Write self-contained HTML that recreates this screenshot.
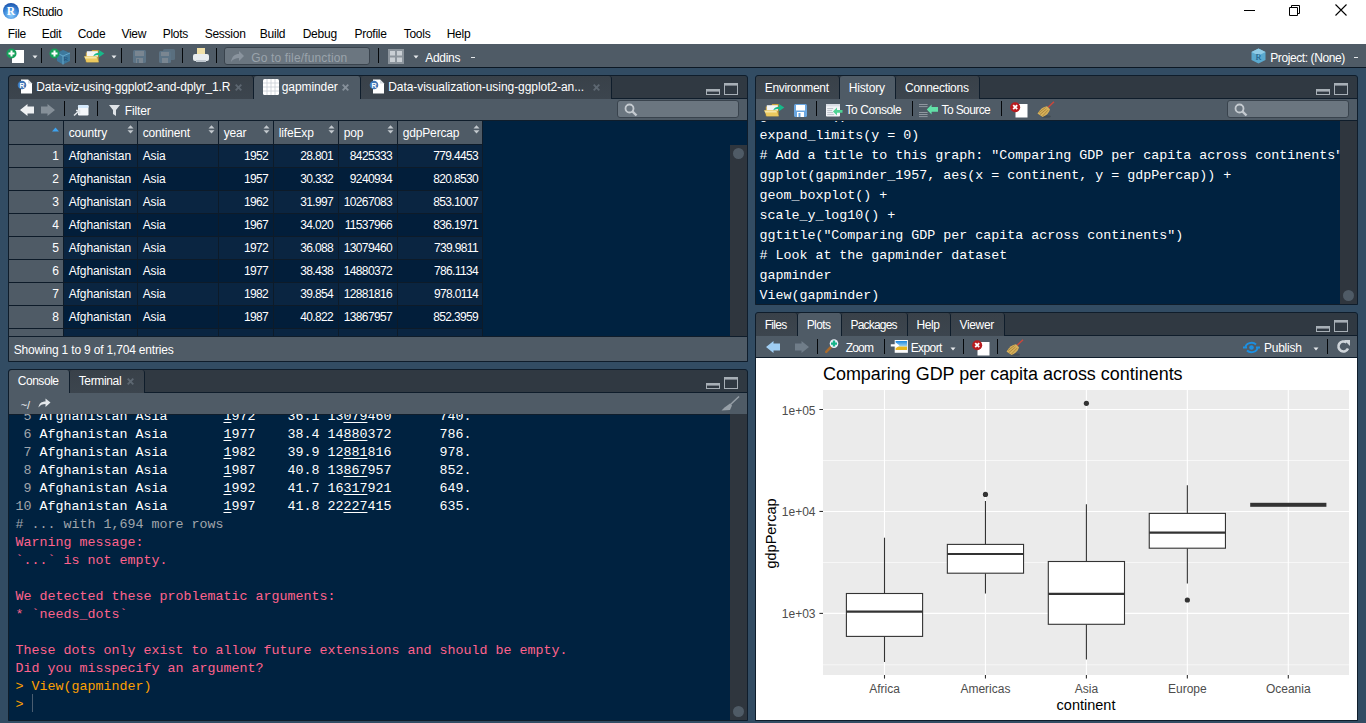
<!DOCTYPE html>
<html><head><meta charset="utf-8">
<style>
*{margin:0;padding:0;box-sizing:border-box}
html,body{width:1366px;height:723px;overflow:hidden;background:#324c63;font-family:"Liberation Sans",sans-serif;font-size:12px;color:#fff}
.a{position:absolute}
.t{position:absolute;white-space:pre;line-height:1}
.pane{position:absolute;background:#002240;border:1px solid #0f1d2b;border-radius:3px 3px 0 0;overflow:hidden}
.tabbar{position:absolute;left:0;top:0;right:0;height:23px;background:#303942;border-bottom:1px solid #0f1d2b}
.tab{position:absolute;top:0;height:23px;background:linear-gradient(#394149,#3c454e);border-right:1px solid #0f1d2b;border-radius:3px 3px 0 0}
.tab.on{background:#4f5b66;height:24px}
.ptb{position:absolute;left:0;right:0;height:22px;background:#4f5b66;border-bottom:1px solid #0f1d2b}
.cl{position:absolute;white-space:pre;font-family:"Liberation Mono",monospace;font-size:13.33px;line-height:18px}
.cl u{text-decoration:underline;text-underline-offset:1.5px;text-decoration-thickness:1px}
</style></head><body>
<div class="a" style="left:0;top:0;width:1366px;height:44px;background:#fff"></div>
<svg class="a" style="left:2px;top:2px" width="18" height="18" viewBox="0 0 18 18"><defs><radialGradient id="rg" cx="50%" cy="75%" r="75%"><stop offset="0" stop-color="#8fd0ff"/><stop offset="0.6" stop-color="#3a86d8"/><stop offset="1" stop-color="#1a4fa8"/></radialGradient></defs><circle cx="9" cy="9" r="8" fill="url(#rg)"/><text x="9" y="13.2" font-family="Liberation Serif" font-weight="bold" font-size="11.5" fill="#fff" text-anchor="middle">R</text></svg>
<span class="t" style="left:22.70px;top:6.14px;color:#000;font-size:12px;letter-spacing:-0.4px">RStudio</span>
<svg class="a" style="left:1244px;top:10px" width="12" height="2"><rect width="11" height="1" fill="#000"/></svg>
<svg class="a" style="left:1288px;top:4px" width="13" height="13"><path d="M1.5 3.5h8v8h-8z M3.5 3.5v-2h8v8h-2" fill="none" stroke="#000"/></svg>
<svg class="a" style="left:1335px;top:4px" width="12" height="12"><path d="M0.5 0.5L11.5 11.5M11.5 0.5L0.5 11.5" stroke="#000" stroke-width="1.1"/></svg>
<span class="t" style="left:7.70px;top:28.24px;color:#000;font-size:12px;letter-spacing:-0.25px">File</span>
<span class="t" style="left:41.70px;top:28.24px;color:#000;font-size:12px;letter-spacing:-0.25px">Edit</span>
<span class="t" style="left:77.70px;top:28.24px;color:#000;font-size:12px;letter-spacing:-0.25px">Code</span>
<span class="t" style="left:121.40px;top:28.24px;color:#000;font-size:12px;letter-spacing:-0.25px">View</span>
<span class="t" style="left:162.70px;top:28.24px;color:#000;font-size:12px;letter-spacing:-0.25px">Plots</span>
<span class="t" style="left:204.70px;top:28.24px;color:#000;font-size:12px;letter-spacing:-0.25px">Session</span>
<span class="t" style="left:259.80px;top:28.24px;color:#000;font-size:12px;letter-spacing:-0.25px">Build</span>
<span class="t" style="left:302.70px;top:28.24px;color:#000;font-size:12px;letter-spacing:-0.25px">Debug</span>
<span class="t" style="left:354.40px;top:28.24px;color:#000;font-size:12px;letter-spacing:-0.25px">Profile</span>
<span class="t" style="left:403.70px;top:28.24px;color:#000;font-size:12px;letter-spacing:-0.25px">Tools</span>
<span class="t" style="left:446.70px;top:28.24px;color:#000;font-size:12px;letter-spacing:-0.25px">Help</span>
<div class="a" style="left:0;top:44px;width:1366px;height:24px;background:#4f5b66;border-bottom:1px solid #0c1824"></div>
<svg class="a" style="left:6px;top:48px" width="20" height="16" viewBox="0 0 20 16"><rect x="6" y="2" width="12" height="13" fill="#fff"/><circle cx="5.5" cy="5.5" r="5" fill="#16a05a"/><path d="M5.5 2.5v6M2.5 5.5h6" stroke="#fff" stroke-width="2"/></svg>
<svg class="a" style="left:32px;top:55px" width="6" height="4"><path d="M0.5 0.5h5l-2.5 3z" fill="#e6e9ec"/></svg>
<div class="a" style="left:41px;top:48px;width:1px;height:15px;background:#05080b"></div>
<svg class="a" style="left:49px;top:48px" width="22" height="17" viewBox="0 0 22 17"><path d="M8 5l6-3 7 3v8l-7 3.5-6-3.5z" fill="#3a7fa8" opacity="0.85"/><path d="M8 5l6 3 7-3M14 8v8.5" stroke="#6fb4d8" stroke-width="0.8" fill="none"/><text x="14.5" y="13" font-family="Liberation Serif" font-size="7" fill="#1a4e7a">R</text><circle cx="5.5" cy="5.5" r="5" fill="#16a05a"/><path d="M5.5 2.5v6M2.5 5.5h6" stroke="#fff" stroke-width="2"/></svg>
<div class="a" style="left:75px;top:48px;width:1px;height:15px;background:#05080b"></div>
<svg class="a" style="left:84px;top:49px" width="21" height="14" viewBox="0 0 21 14"><path d="M1.8 3.4H6.8L8.2 1.1H14.6V13.3H1.8z" fill="#c9a23c"/><rect x="2.8" y="2.2" width="11" height="5.5" fill="#f2f4f6"/><path d="M0 7.2H12.6L14.7 13.3H2.8z" fill="#ecc95e"/><path d="M0.6 7.7H12.2L12.9 9.6H1.3z" fill="#f6e6a6"/><path d="M9.2 7.2C10.3 4.6 12.5 3.8 15 3.8V1L20.3 4.6 15 8.2V5.9C13 5.9 11 6.3 9.2 7.2z" fill="#17b98a"/></svg>
<svg class="a" style="left:111px;top:55px" width="6" height="4"><path d="M0.5 0.5h5l-2.5 3z" fill="#e6e9ec"/></svg>
<div class="a" style="left:121px;top:48px;width:1px;height:15px;background:#05080b"></div>
<svg class="a" style="left:133px;top:50px" width="13" height="13" viewBox="0 0 13 13"><rect x="0" y="0" width="13" height="13" rx="1.5" fill="#5d7486"/><rect x="2" y="1" width="9" height="5" fill="#7a8691"/><rect x="3" y="8" width="7" height="5" fill="#7a8691"/><rect x="4" y="9" width="2" height="4" fill="#5d7486"/></svg>
<svg class="a" style="left:159px;top:49px" width="16" height="14" viewBox="0 0 16 14"><rect x="4" y="0" width="12" height="11" rx="1.5" fill="#5d7486" opacity="0.8"/><rect x="0" y="2" width="12" height="12" rx="1.5" fill="#5d7486"/><rect x="2" y="3" width="8" height="4" fill="#7a8691"/><rect x="3" y="9" width="6" height="5" fill="#7a8691"/></svg>
<div class="a" style="left:182px;top:48px;width:1px;height:15px;background:#05080b"></div>
<svg class="a" style="left:193px;top:48px" width="16" height="15" viewBox="0 0 16 15"><rect x="4" y="0" width="8" height="7" fill="#f0e0a8"/><rect x="0" y="6" width="16" height="7" rx="2" fill="#e8ecef"/><rect x="3" y="12" width="10" height="2" fill="#c0c8cf"/></svg>
<div class="a" style="left:216px;top:48px;width:1px;height:15px;background:#05080b"></div>
<div class="a" style="left:224px;top:47px;width:146px;height:18px;background:#6b7680;border:1px solid #39434d;border-radius:3px"></div>
<svg class="a" style="left:230px;top:50px" width="15" height="13" viewBox="0 0 15 13"><path d="M1 12c1-6 4-8 8-8V1l5 5-5 5V8c-3 0-6 1-8 4z" fill="#8a949e"/></svg>
<span class="t" style="left:251.20px;top:51.64px;color:#9aa3ab;font-size:12px;letter-spacing:0.15px">Go to file/function</span>
<div class="a" style="left:378px;top:48px;width:1px;height:15px;background:#05080b"></div>
<svg class="a" style="left:388px;top:49px" width="16" height="15" viewBox="0 0 16 15"><rect x="0" y="0" width="16" height="15" fill="#8c959d"/><rect x="2" y="2" width="5" height="4.5" fill="#c9cfd4"/><rect x="9" y="2" width="5" height="4.5" fill="#c9cfd4"/><rect x="2" y="8.5" width="5" height="4.5" fill="#c9cfd4"/><rect x="9" y="8.5" width="5" height="4.5" fill="#c9cfd4"/></svg>
<svg class="a" style="left:413px;top:55px" width="6" height="4"><path d="M0.5 0.5h5l-2.5 3z" fill="#e6e9ec"/></svg>
<span class="t" style="left:425.20px;top:51.64px;color:#fff;font-size:12px;letter-spacing:-0.3px">Addins</span>
<div class="a" style="left:471px;top:57px;width:4px;height:1px;background:#e6e9ec"></div>
<svg class="a" style="left:1251px;top:48px" width="15" height="16" viewBox="0 0 15 16"><path d="M7.5 0.5l7 3.5v8l-7 3.5-7-3.5v-8z" fill="#5aa9cf"/><path d="M7.5 0.5l7 3.5-7 3.5-7-3.5z" fill="#8fcbe6"/><text x="7.5" y="12" font-family="Liberation Serif" font-size="9" fill="#1a5b86" text-anchor="middle">R</text></svg>
<span class="t" style="left:1270.20px;top:51.64px;color:#fff;font-size:12px;letter-spacing:-0.4px">Project: (None)</span>
<div class="a" style="left:1354px;top:57px;width:4px;height:1px;background:#e6e9ec"></div>
<div class="pane" style="left:8px;top:75px;width:740px;height:287px">
<div class="tabbar"></div>
<div class="tab" style="left:0px;width:245px"></div>
<svg class="a" style="left:8px;top:3px" width="16" height="15" viewBox="0 0 16 15"><path d="M4 0.5h7l4 4v10H4z" fill="#fff"/><path d="M11 0.5v4h4" fill="#d8dde2"/><circle cx="5" cy="6" r="4.3" fill="#3f77b8"/><text x="5" y="8.7" font-family="Liberation Sans" font-size="7" font-weight="bold" fill="#fff" text-anchor="middle">R</text></svg>
<span class="t" style="left:27.20px;top:5.44px;color:#fff;font-size:12px;letter-spacing:-0.15px">Data-viz-using-ggplot2-and-dplyr_1.R</span>
<svg class="a" style="left:226px;top:8px" width="7" height="7" viewBox="0 0 7 7"><path d="M0.7 0.7l5.6 5.6M6.3 0.7l-5.6 5.6" stroke="#5d6771" stroke-width="1.9"/></svg>
<div class="tab on" style="left:245px;width:107px"></div>
<svg class="a" style="left:254px;top:3px" width="16" height="16" viewBox="0 0 16 16"><rect x="0" y="0" width="16" height="16" rx="1.5" fill="#fff"/><path d="M4 0v16M8 0v16M12 0v16M0 4h16M0 8h16M0 12h16" stroke="#c9cfd5" stroke-width="0.8"/></svg>
<span class="t" style="left:272.70px;top:5.44px;color:#fff;font-size:12px;letter-spacing:-0.08px">gapminder</span>
<svg class="a" style="left:333px;top:8px" width="7" height="7" viewBox="0 0 7 7"><path d="M0.7 0.7l5.6 5.6M6.3 0.7l-5.6 5.6" stroke="#86909a" stroke-width="1.9"/></svg>
<div class="tab" style="left:352px;width:251px"></div>
<svg class="a" style="left:360px;top:3px" width="16" height="15" viewBox="0 0 16 15"><path d="M4 0.5h7l4 4v10H4z" fill="#fff"/><path d="M11 0.5v4h4" fill="#d8dde2"/><circle cx="5" cy="6" r="4.3" fill="#3f77b8"/><text x="5" y="8.7" font-family="Liberation Sans" font-size="7" font-weight="bold" fill="#fff" text-anchor="middle">R</text></svg>
<span class="t" style="left:379.20px;top:5.44px;color:#fff;font-size:12px;letter-spacing:-0.06px">Data-visualization-using-ggplot2-an...</span>
<svg class="a" style="left:584px;top:8px" width="7" height="7" viewBox="0 0 7 7"><path d="M0.7 0.7l5.6 5.6M6.3 0.7l-5.6 5.6" stroke="#5d6771" stroke-width="1.9"/></svg>
<svg class="a" style="left:697px;top:7px" width="34" height="14" viewBox="0 0 34 14"><rect x="0.5" y="6.5" width="13" height="5" fill="none" stroke="#a7afb6"/><rect x="1" y="7" width="12" height="1.6" fill="#a7afb6"/><rect x="18.5" y="0.5" width="13" height="11" fill="none" stroke="#a7afb6"/><rect x="19" y="1" width="12" height="1.6" fill="#a7afb6"/></svg>
<div class="ptb" style="top:23px"></div>
<svg class="a" style="left:11px;top:28px" width="36" height="12" viewBox="0 0 36 12"><path d="M0 6L7.5 0V2.6H14V9.4H7.5V12z" fill="#eef0f2"/><path d="M35 6L27.5 0V2.6H21V9.4H27.5V12z" fill="#858f98"/></svg>
<div class="a" style="left:55px;top:25px;width:1px;height:15px;background:#05080b"></div>
<svg class="a" style="left:64px;top:29px" width="16" height="12" viewBox="0 0 16 12"><rect x="5" y="0" width="10.5" height="10.5" rx="1.2" fill="#f4f7fa"/><rect x="5" y="0" width="10.5" height="3" rx="1" fill="#d3e8fb"/><path d="M1 10.5l5-4.5M3 5.5h3.5v3.5" stroke="#dfe4e8" stroke-width="1.6" fill="none"/></svg>
<div class="a" style="left:88px;top:25px;width:1px;height:15px;background:#05080b"></div>
<svg class="a" style="left:100px;top:29px" width="11" height="11" viewBox="0 0 11 11"><path d="M0 0h11L7 5v6l-3-2V5z" fill="#dfe3e7"/></svg>
<span class="t" style="left:115.70px;top:28.64px;color:#fff;font-size:12px;letter-spacing:-0.1px">Filter</span>
<div class="a" style="left:608px;top:24px;width:122px;height:18px;background:#6b7680;border:1px solid #39434d;border-radius:3px"></div><svg class="a" style="left:615px;top:27px" width="14" height="14" viewBox="0 0 14 14"><circle cx="5.5" cy="5.5" r="4" fill="none" stroke="#c4cacf" stroke-width="1.8"/><path d="M8.5 8.5l4 4" stroke="#c4cacf" stroke-width="2.4"/></svg>
<div class="a" style="left:0;top:45px;width:54px;height:215px;background:#4f5b66"></div>
<div class="a" style="left:55px;top:45px;width:418px;height:23px;background:#4f5b66"></div>
<svg class="a" style="left:43px;top:51px" width="7" height="5"><path d="M0 4.5L3.5 0.5 7 4.5z" fill="#3ea3f0"/></svg>
<span class="t" style="left:59.70px;top:50.94px;color:#fff;font-size:12px;letter-spacing:-0.15px">country</span>
<svg class="a" style="left:118px;top:49px" width="7" height="9" viewBox="0 0 7 9"><path d="M0.5 3.5L3.5 0.3 6.5 3.5zM0.5 5.3L3.5 8.5 6.5 5.3z" fill="#c3c9ce"/></svg>
<span class="t" style="left:133.70px;top:50.94px;color:#fff;font-size:12px;letter-spacing:-0.15px">continent</span>
<svg class="a" style="left:199px;top:49px" width="7" height="9" viewBox="0 0 7 9"><path d="M0.5 3.5L3.5 0.3 6.5 3.5zM0.5 5.3L3.5 8.5 6.5 5.3z" fill="#c3c9ce"/></svg>
<span class="t" style="left:214.70px;top:50.94px;color:#fff;font-size:12px;letter-spacing:-0.15px">year</span>
<svg class="a" style="left:254px;top:49px" width="7" height="9" viewBox="0 0 7 9"><path d="M0.5 3.5L3.5 0.3 6.5 3.5zM0.5 5.3L3.5 8.5 6.5 5.3z" fill="#c3c9ce"/></svg>
<span class="t" style="left:269.70px;top:50.94px;color:#fff;font-size:12px;letter-spacing:-0.15px">lifeExp</span>
<svg class="a" style="left:319px;top:49px" width="7" height="9" viewBox="0 0 7 9"><path d="M0.5 3.5L3.5 0.3 6.5 3.5zM0.5 5.3L3.5 8.5 6.5 5.3z" fill="#c3c9ce"/></svg>
<span class="t" style="left:334.70px;top:50.94px;color:#fff;font-size:12px;letter-spacing:-0.15px">pop</span>
<svg class="a" style="left:378px;top:49px" width="7" height="9" viewBox="0 0 7 9"><path d="M0.5 3.5L3.5 0.3 6.5 3.5zM0.5 5.3L3.5 8.5 6.5 5.3z" fill="#c3c9ce"/></svg>
<span class="t" style="left:393.70px;top:50.94px;color:#fff;font-size:12px;letter-spacing:-0.15px">gdpPercap</span>
<svg class="a" style="left:464px;top:49px" width="7" height="9" viewBox="0 0 7 9"><path d="M0.5 3.5L3.5 0.3 6.5 3.5zM0.5 5.3L3.5 8.5 6.5 5.3z" fill="#c3c9ce"/></svg>
<div class="a" style="left:55px;top:69px;width:418px;height:22px;background:#0a2541"></div>
<div class="a" style="left:0;top:68px;width:473px;height:1px;background:#0d1b29"></div>
<span class="t" style="left:0;width:50px;text-align:right;top:74.34px;color:#fff">1</span>
<span class="t" style="left:59.70px;top:74.34px;color:#fff;font-size:12px;letter-spacing:-0.1px">Afghanistan</span>
<span class="t" style="left:133.70px;top:74.34px;color:#fff;font-size:12px;letter-spacing:-0.1px">Asia</span>
<span class="t" style="left:210px;width:49px;text-align:right;top:74.34px;letter-spacing:-0.65px">1952</span>
<span class="t" style="left:265px;width:59px;text-align:right;top:74.34px;letter-spacing:-0.65px">28.801</span>
<span class="t" style="left:330px;width:53px;text-align:right;top:74.34px;letter-spacing:-0.65px">8425333</span>
<span class="t" style="left:389px;width:80px;text-align:right;top:74.34px;letter-spacing:-0.65px">779.4453</span>
<div class="a" style="left:55px;top:92px;width:418px;height:22px;background:#021e3a"></div>
<div class="a" style="left:0;top:91px;width:473px;height:1px;background:#0d1b29"></div>
<span class="t" style="left:0;width:50px;text-align:right;top:97.34px;color:#fff">2</span>
<span class="t" style="left:59.70px;top:97.34px;color:#fff;font-size:12px;letter-spacing:-0.1px">Afghanistan</span>
<span class="t" style="left:133.70px;top:97.34px;color:#fff;font-size:12px;letter-spacing:-0.1px">Asia</span>
<span class="t" style="left:210px;width:49px;text-align:right;top:97.34px;letter-spacing:-0.65px">1957</span>
<span class="t" style="left:265px;width:59px;text-align:right;top:97.34px;letter-spacing:-0.65px">30.332</span>
<span class="t" style="left:330px;width:53px;text-align:right;top:97.34px;letter-spacing:-0.65px">9240934</span>
<span class="t" style="left:389px;width:80px;text-align:right;top:97.34px;letter-spacing:-0.65px">820.8530</span>
<div class="a" style="left:55px;top:115px;width:418px;height:22px;background:#0a2541"></div>
<div class="a" style="left:0;top:114px;width:473px;height:1px;background:#0d1b29"></div>
<span class="t" style="left:0;width:50px;text-align:right;top:120.34px;color:#fff">3</span>
<span class="t" style="left:59.70px;top:120.34px;color:#fff;font-size:12px;letter-spacing:-0.1px">Afghanistan</span>
<span class="t" style="left:133.70px;top:120.34px;color:#fff;font-size:12px;letter-spacing:-0.1px">Asia</span>
<span class="t" style="left:210px;width:49px;text-align:right;top:120.34px;letter-spacing:-0.65px">1962</span>
<span class="t" style="left:265px;width:59px;text-align:right;top:120.34px;letter-spacing:-0.65px">31.997</span>
<span class="t" style="left:330px;width:53px;text-align:right;top:120.34px;letter-spacing:-0.65px">10267083</span>
<span class="t" style="left:389px;width:80px;text-align:right;top:120.34px;letter-spacing:-0.65px">853.1007</span>
<div class="a" style="left:55px;top:138px;width:418px;height:22px;background:#021e3a"></div>
<div class="a" style="left:0;top:137px;width:473px;height:1px;background:#0d1b29"></div>
<span class="t" style="left:0;width:50px;text-align:right;top:143.34px;color:#fff">4</span>
<span class="t" style="left:59.70px;top:143.34px;color:#fff;font-size:12px;letter-spacing:-0.1px">Afghanistan</span>
<span class="t" style="left:133.70px;top:143.34px;color:#fff;font-size:12px;letter-spacing:-0.1px">Asia</span>
<span class="t" style="left:210px;width:49px;text-align:right;top:143.34px;letter-spacing:-0.65px">1967</span>
<span class="t" style="left:265px;width:59px;text-align:right;top:143.34px;letter-spacing:-0.65px">34.020</span>
<span class="t" style="left:330px;width:53px;text-align:right;top:143.34px;letter-spacing:-0.65px">11537966</span>
<span class="t" style="left:389px;width:80px;text-align:right;top:143.34px;letter-spacing:-0.65px">836.1971</span>
<div class="a" style="left:55px;top:161px;width:418px;height:22px;background:#0a2541"></div>
<div class="a" style="left:0;top:160px;width:473px;height:1px;background:#0d1b29"></div>
<span class="t" style="left:0;width:50px;text-align:right;top:166.34px;color:#fff">5</span>
<span class="t" style="left:59.70px;top:166.34px;color:#fff;font-size:12px;letter-spacing:-0.1px">Afghanistan</span>
<span class="t" style="left:133.70px;top:166.34px;color:#fff;font-size:12px;letter-spacing:-0.1px">Asia</span>
<span class="t" style="left:210px;width:49px;text-align:right;top:166.34px;letter-spacing:-0.65px">1972</span>
<span class="t" style="left:265px;width:59px;text-align:right;top:166.34px;letter-spacing:-0.65px">36.088</span>
<span class="t" style="left:330px;width:53px;text-align:right;top:166.34px;letter-spacing:-0.65px">13079460</span>
<span class="t" style="left:389px;width:80px;text-align:right;top:166.34px;letter-spacing:-0.65px">739.9811</span>
<div class="a" style="left:55px;top:184px;width:418px;height:22px;background:#021e3a"></div>
<div class="a" style="left:0;top:183px;width:473px;height:1px;background:#0d1b29"></div>
<span class="t" style="left:0;width:50px;text-align:right;top:189.34px;color:#fff">6</span>
<span class="t" style="left:59.70px;top:189.34px;color:#fff;font-size:12px;letter-spacing:-0.1px">Afghanistan</span>
<span class="t" style="left:133.70px;top:189.34px;color:#fff;font-size:12px;letter-spacing:-0.1px">Asia</span>
<span class="t" style="left:210px;width:49px;text-align:right;top:189.34px;letter-spacing:-0.65px">1977</span>
<span class="t" style="left:265px;width:59px;text-align:right;top:189.34px;letter-spacing:-0.65px">38.438</span>
<span class="t" style="left:330px;width:53px;text-align:right;top:189.34px;letter-spacing:-0.65px">14880372</span>
<span class="t" style="left:389px;width:80px;text-align:right;top:189.34px;letter-spacing:-0.65px">786.1134</span>
<div class="a" style="left:55px;top:207px;width:418px;height:22px;background:#0a2541"></div>
<div class="a" style="left:0;top:206px;width:473px;height:1px;background:#0d1b29"></div>
<span class="t" style="left:0;width:50px;text-align:right;top:212.34px;color:#fff">7</span>
<span class="t" style="left:59.70px;top:212.34px;color:#fff;font-size:12px;letter-spacing:-0.1px">Afghanistan</span>
<span class="t" style="left:133.70px;top:212.34px;color:#fff;font-size:12px;letter-spacing:-0.1px">Asia</span>
<span class="t" style="left:210px;width:49px;text-align:right;top:212.34px;letter-spacing:-0.65px">1982</span>
<span class="t" style="left:265px;width:59px;text-align:right;top:212.34px;letter-spacing:-0.65px">39.854</span>
<span class="t" style="left:330px;width:53px;text-align:right;top:212.34px;letter-spacing:-0.65px">12881816</span>
<span class="t" style="left:389px;width:80px;text-align:right;top:212.34px;letter-spacing:-0.65px">978.0114</span>
<div class="a" style="left:55px;top:230px;width:418px;height:22px;background:#021e3a"></div>
<div class="a" style="left:0;top:229px;width:473px;height:1px;background:#0d1b29"></div>
<span class="t" style="left:0;width:50px;text-align:right;top:235.34px;color:#fff">8</span>
<span class="t" style="left:59.70px;top:235.34px;color:#fff;font-size:12px;letter-spacing:-0.1px">Afghanistan</span>
<span class="t" style="left:133.70px;top:235.34px;color:#fff;font-size:12px;letter-spacing:-0.1px">Asia</span>
<span class="t" style="left:210px;width:49px;text-align:right;top:235.34px;letter-spacing:-0.65px">1987</span>
<span class="t" style="left:265px;width:59px;text-align:right;top:235.34px;letter-spacing:-0.65px">40.822</span>
<span class="t" style="left:330px;width:53px;text-align:right;top:235.34px;letter-spacing:-0.65px">13867957</span>
<span class="t" style="left:389px;width:80px;text-align:right;top:235.34px;letter-spacing:-0.65px">852.3959</span>
<div class="a" style="left:55px;top:253px;width:418px;height:22px;background:#0a2541"></div>
<div class="a" style="left:0;top:252px;width:473px;height:1px;background:#0d1b29"></div>
<div class="a" style="left:54px;top:45px;width:1px;height:215px;background:#0d1b29"></div>
<div class="a" style="left:128px;top:45px;width:1px;height:215px;background:#0d1b29"></div>
<div class="a" style="left:209px;top:45px;width:1px;height:215px;background:#0d1b29"></div>
<div class="a" style="left:264px;top:45px;width:1px;height:215px;background:#0d1b29"></div>
<div class="a" style="left:329px;top:45px;width:1px;height:215px;background:#0d1b29"></div>
<div class="a" style="left:388px;top:45px;width:1px;height:215px;background:#0d1b29"></div>
<div class="a" style="left:473px;top:45px;width:1px;height:215px;background:#0d1b29"></div>
<div class="a" style="left:721px;top:69px;width:17px;height:191px;background:#2f363e"></div>
<div class="a" style="left:724px;top:72px;width:11px;height:11px;border-radius:50%;background:#4f5b66"></div>
<div class="a" style="left:0;top:260px;width:740px;height:26px;background:#4f5b66;border-top:1px solid #0f1d2b"></div>
<span class="t" style="left:4.70px;top:267.74px;color:#fff;font-size:12px;letter-spacing:-0.18px">Showing 1 to 9 of 1,704 entries</span>
</div>
<div class="pane" style="left:8px;top:369px;width:740px;height:352px">
<div class="tabbar"></div>
<div class="tab on" style="left:0px;width:61px"></div>
<span class="t" style="left:8.70px;top:5.34px;color:#fff;font-size:12px;letter-spacing:-0.45px">Console</span>
<div class="tab" style="left:61px;width:75px"></div>
<span class="t" style="left:69.70px;top:5.34px;color:#fff;font-size:12px;letter-spacing:-0.35px">Terminal</span>
<svg class="a" style="left:118px;top:8px" width="7" height="7" viewBox="0 0 7 7"><path d="M0.7 0.7l5.6 5.6M6.3 0.7l-5.6 5.6" stroke="#5d6771" stroke-width="1.9"/></svg>
<svg class="a" style="left:697px;top:7px" width="34" height="14" viewBox="0 0 34 14"><rect x="0.5" y="6.5" width="13" height="5" fill="none" stroke="#a7afb6"/><rect x="1" y="7" width="12" height="1.6" fill="#a7afb6"/><rect x="18.5" y="0.5" width="13" height="11" fill="none" stroke="#a7afb6"/><rect x="19" y="1" width="12" height="1.6" fill="#a7afb6"/></svg>
<div class="ptb" style="top:23px"></div>
<span class="t" style="left:11.70px;top:29.94px;color:#e8ecef;font-size:11px">~/</span>
<svg class="a" style="left:29px;top:28px" width="13" height="10" viewBox="0 0 13 10"><path d="M0.5 9.5c0.5-4 3-6 7-6V0.5l5 4-5 4.5V6c-3 0-5.5 1-7 3.5z" fill="#e3e7ea"/></svg>
<svg class="a" style="left:712px;top:26px" width="19" height="15" viewBox="0 0 19 15"><path d="M18 0.5L9 9" stroke="#97a0a8" stroke-width="1.4"/><path d="M9 7.5l2 2-2 4.5-8.5 0.5 3-3z" fill="#97a0a8"/></svg>
<div class="a" style="left:721px;top:44px;width:17px;height:306px;background:#2f363e"></div>
<div class="a" style="left:724px;top:336px;width:11px;height:11px;border-radius:50%;background:#4f5b66"></div>
<div class="a" style="left:0;top:44px;width:721px;height:306px;overflow:hidden"><div class="cl" style="left:6.5px;top:-6.40px"><span style="color:#a0a6ac"> 5 </span><span style="color:#ffffff">Afghanistan Asia       <u>1</u>972    36.1 13<u>079</u>460      740.</span></div><div class="cl" style="left:6.5px;top:11.60px"><span style="color:#a0a6ac"> 6 </span><span style="color:#ffffff">Afghanistan Asia       <u>1</u>977    38.4 14<u>880</u>372      786.</span></div><div class="cl" style="left:6.5px;top:29.60px"><span style="color:#a0a6ac"> 7 </span><span style="color:#ffffff">Afghanistan Asia       <u>1</u>982    39.9 12<u>881</u>816      978.</span></div><div class="cl" style="left:6.5px;top:47.60px"><span style="color:#a0a6ac"> 8 </span><span style="color:#ffffff">Afghanistan Asia       <u>1</u>987    40.8 13<u>867</u>957      852.</span></div><div class="cl" style="left:6.5px;top:65.60px"><span style="color:#a0a6ac"> 9 </span><span style="color:#ffffff">Afghanistan Asia       <u>1</u>992    41.7 16<u>317</u>921      649.</span></div><div class="cl" style="left:6.5px;top:83.60px"><span style="color:#a0a6ac">10 </span><span style="color:#ffffff">Afghanistan Asia       <u>1</u>997    41.8 22<u>227</u>415      635.</span></div><div class="cl" style="left:6.5px;top:101.60px"><span style="color:#a0a6ac"># ... with 1,694 more rows</span></div><div class="cl" style="left:6.5px;top:119.60px"><span style="color:#ff628c">Warning message:</span></div><div class="cl" style="left:6.5px;top:137.60px"><span style="color:#ff628c">`...` is not empty.</span></div><div class="cl" style="left:6.5px;top:155.60px"><span style="color:#ff628c"></span></div><div class="cl" style="left:6.5px;top:173.60px"><span style="color:#ff628c">We detected these problematic arguments:</span></div><div class="cl" style="left:6.5px;top:191.60px"><span style="color:#ff628c">* `needs_dots`</span></div><div class="cl" style="left:6.5px;top:209.60px"><span style="color:#ff628c"></span></div><div class="cl" style="left:6.5px;top:227.60px"><span style="color:#ff628c">These dots only exist to allow future extensions and should be empty.</span></div><div class="cl" style="left:6.5px;top:245.60px"><span style="color:#ff628c">Did you misspecify an argument?</span></div><div class="cl" style="left:6.5px;top:263.60px"><span style="color:#ffa000">&gt; View(gapminder)</span></div><div class="cl" style="left:6.5px;top:281.60px"><span style="color:#ffa000">&gt; </span></div><div class="a" style="left:23px;top:280px;width:1px;height:18px;background:#4a5d70"></div></div>
</div>
<div class="pane" style="left:755px;top:75px;width:603px;height:230px">
<div class="tabbar"></div>
<div class="tab" style="left:0px;width:84px"></div>
<span class="t" style="left:8.70px;top:5.64px;color:#fff;font-size:12px;letter-spacing:-0.3px">Environment</span>
<div class="tab on" style="left:84px;width:56px"></div>
<span class="t" style="left:92.70px;top:5.64px;color:#fff;font-size:12px;letter-spacing:-0.18px">History</span>
<div class="tab" style="left:140px;width:84px"></div>
<span class="t" style="left:149.00px;top:5.64px;color:#fff;font-size:12px;letter-spacing:-0.28px">Connections</span>
<svg class="a" style="left:560px;top:7px" width="34" height="14" viewBox="0 0 34 14"><rect x="0.5" y="6.5" width="13" height="5" fill="none" stroke="#a7afb6"/><rect x="1" y="7" width="12" height="1.6" fill="#a7afb6"/><rect x="18.5" y="0.5" width="13" height="11" fill="none" stroke="#a7afb6"/><rect x="19" y="1" width="12" height="1.6" fill="#a7afb6"/></svg>
<div class="ptb" style="top:23px"></div>
<svg class="a" style="left:8px;top:27px" width="21" height="14" viewBox="0 0 21 14"><path d="M1.8 3.4H6.8L8.2 1.1H14.6V13.3H1.8z" fill="#c9a23c"/><rect x="2.8" y="2.2" width="11" height="5.5" fill="#f2f4f6"/><path d="M0 7.2H12.6L14.7 13.3H2.8z" fill="#ecc95e"/><path d="M0.6 7.7H12.2L12.9 9.6H1.3z" fill="#f6e6a6"/><path d="M9.2 7.2C10.3 4.6 12.5 3.8 15 3.8V1L20.3 4.6 15 8.2V5.9C13 5.9 11 6.3 9.2 7.2z" fill="#17b98a"/></svg>
<svg class="a" style="left:38px;top:28px" width="13" height="13" viewBox="0 0 13 13"><rect x="0" y="0" width="13" height="13" rx="1.5" fill="#6aa6e0"/><rect x="2" y="1" width="9" height="5.5" fill="#fff"/><rect x="3" y="8" width="7" height="5" fill="#fff"/><rect x="4.5" y="9" width="2" height="4" fill="#6aa6e0"/></svg>
<div class="a" style="left:60px;top:25px;width:1px;height:15px;background:#05080b"></div>
<svg class="a" style="left:70px;top:28px" width="17" height="13" viewBox="0 0 17 13"><rect x="0" y="0" width="14" height="12.6" rx="0.8" fill="#f3f5f8"/><rect x="0" y="0" width="14" height="2.4" fill="#d9dee5"/><path d="M1.2 4.6h6M1.2 6.6h5M1.2 8.6h6M1.2 10.6h7" stroke="#b3bac3" stroke-width="0.9"/><path d="M7 7.5L11 3.5V6H16.5V8.7H11V11.5z" fill="#4fd494"/></svg>
<span class="t" style="left:89.40px;top:28.44px;color:#fff;font-size:12px;letter-spacing:-0.42px">To Console</span>
<div class="a" style="left:156px;top:25px;width:1px;height:15px;background:#05080b"></div>
<svg class="a" style="left:162px;top:28px" width="21" height="14" viewBox="0 0 21 14"><path d="M1 0.5h8.6M1 2.6h8.6M1 8.5h8.6M1 10.5h8.6M1 12.6h8.6" stroke="#8f979f" stroke-width="1"/><path d="M8.8 5.4L13.6 0.4V3H20V7.7H13.6V10.5z" fill="#62e0a8"/></svg>
<span class="t" style="left:185.50px;top:28.44px;color:#fff;font-size:12px;letter-spacing:-0.6px">To Source</span>
<div class="a" style="left:245px;top:25px;width:1px;height:15px;background:#05080b"></div>
<svg class="a" style="left:254px;top:26px" width="18" height="16" viewBox="0 0 18 16"><rect x="5.5" y="2" width="12" height="13.5" fill="#fff"/><circle cx="5.2" cy="5.2" r="5" fill="#b81c1f"/><path d="M3.2 3.2l4 4M7.2 3.2l-4 4" stroke="#fff" stroke-width="1.8"/></svg>
<svg class="a" style="left:281px;top:25px" width="18" height="17" viewBox="0 0 18 17"><path d="M17 0.7L11 6.5" stroke="#c8473c" stroke-width="1.5"/><ellipse cx="9" cy="15.5" rx="5" ry="1.3" fill="#3a434b" opacity="0.6"/><path d="M10 5.3l3 3c-0.8 3-3 6.2-7.5 7.7L0.5 12.5c3-4.5 5.5-6.8 9.5-7.2z" fill="#d6b05a"/><path d="M3 13.5l6.5-5.5M5.5 15l5.5-5.8M2 11.5l6.5-5" stroke="#a27d34" stroke-width="0.8"/></svg>
<div class="a" style="left:471px;top:24px;width:122px;height:18px;background:#6b7680;border:1px solid #39434d;border-radius:3px"></div><svg class="a" style="left:478px;top:27px" width="14" height="14" viewBox="0 0 14 14"><circle cx="5.5" cy="5.5" r="4" fill="none" stroke="#c4cacf" stroke-width="1.8"/><path d="M8.5 8.5l4 4" stroke="#c4cacf" stroke-width="2.4"/></svg>
<div class="a" style="left:0;top:45px;width:584px;height:183px;overflow:hidden"><div class="cl" style="left:3.4px;top:-14.70px;line-height:20px;color:#fff">geom_line()</div><div class="cl" style="left:3.4px;top:5.30px;line-height:20px;color:#fff">expand_limits(y = 0)</div><div class="cl" style="left:3.4px;top:25.30px;line-height:20px;color:#fff"># Add a title to this graph: "Comparing GDP per capita across continents"</div><div class="cl" style="left:3.4px;top:45.30px;line-height:20px;color:#fff">ggplot(gapminder_1957, aes(x = continent, y = gdpPercap)) +</div><div class="cl" style="left:3.4px;top:65.30px;line-height:20px;color:#fff">geom_boxplot() +</div><div class="cl" style="left:3.4px;top:85.30px;line-height:20px;color:#fff">scale_y_log10() +</div><div class="cl" style="left:3.4px;top:105.30px;line-height:20px;color:#fff">ggtitle("Comparing GDP per capita across continents")</div><div class="cl" style="left:3.4px;top:125.30px;line-height:20px;color:#fff"># Look at the gapminder dataset</div><div class="cl" style="left:3.4px;top:145.30px;line-height:20px;color:#fff">gapminder</div><div class="cl" style="left:3.4px;top:165.30px;line-height:20px;color:#fff">View(gapminder)</div></div>
<div class="a" style="left:584px;top:45px;width:17px;height:183px;background:#2f363e"></div>
<div class="a" style="left:587px;top:214px;width:11px;height:11px;border-radius:50%;background:#4f5b66"></div>
</div>
<div class="pane" style="left:755px;top:312px;width:603px;height:409px">
<div class="tabbar"></div>
<div class="tab" style="left:0px;width:42px"></div>
<span class="t" style="left:8.70px;top:5.64px;color:#fff;font-size:12px;letter-spacing:-0.7px">Files</span>
<div class="tab on" style="left:42px;width:44px"></div>
<span class="t" style="left:50.70px;top:5.64px;color:#fff;font-size:12px;letter-spacing:-0.6px">Plots</span>
<div class="tab" style="left:86px;width:66px"></div>
<span class="t" style="left:94.50px;top:5.64px;color:#fff;font-size:12px;letter-spacing:-0.8px">Packages</span>
<div class="tab" style="left:152px;width:43px"></div>
<span class="t" style="left:160.40px;top:5.64px;color:#fff;font-size:12px;letter-spacing:-0.4px">Help</span>
<div class="tab" style="left:195px;width:54px"></div>
<span class="t" style="left:203.40px;top:5.64px;color:#fff;font-size:12px;letter-spacing:-0.3px">Viewer</span>
<svg class="a" style="left:560px;top:7px" width="34" height="14" viewBox="0 0 34 14"><rect x="0.5" y="6.5" width="13" height="5" fill="none" stroke="#a7afb6"/><rect x="1" y="7" width="12" height="1.6" fill="#a7afb6"/><rect x="18.5" y="0.5" width="13" height="11" fill="none" stroke="#a7afb6"/><rect x="19" y="1" width="12" height="1.6" fill="#a7afb6"/></svg>
<div class="ptb" style="top:23px"></div>
<svg class="a" style="left:10px;top:28px" width="44" height="12" viewBox="0 0 44 12"><path d="M0 6L7.5 0V2.6H14V9.4H7.5V12z" fill="#9fcdf2"/><path d="M43 6L35.5 0V2.6H29V9.4H35.5V12z" fill="#707d89"/></svg>
<div class="a" style="left:61px;top:26px;width:1px;height:15px;background:#05080b"></div>
<svg class="a" style="left:68px;top:26px" width="16" height="16" viewBox="0 0 16 16"><path d="M2.2 12.8l4.3-4.3" stroke="#a86a2c" stroke-width="2.5" stroke-linecap="round"/><circle cx="10" cy="4.6" r="4.3" fill="#eef3fb"/><path d="M10 1.6v6M7 4.6h6" stroke="#17b58a" stroke-width="2.4"/></svg>
<span class="t" style="left:89.80px;top:28.64px;color:#fff;font-size:12px;letter-spacing:-0.85px">Zoom</span>
<div class="a" style="left:128px;top:26px;width:1px;height:15px;background:#05080b"></div>
<svg class="a" style="left:134px;top:27px" width="19" height="14" viewBox="0 0 19 14"><defs><linearGradient id="sky" x1="0" y1="0" x2="0" y2="1"><stop offset="0" stop-color="#1a86e0"/><stop offset="1" stop-color="#a8d8f0"/></linearGradient></defs><rect x="4.7" y="0" width="13.2" height="12.8" fill="#fbfbfb"/><rect x="5.6" y="1" width="11.4" height="5.6" fill="url(#sky)"/><rect x="5.6" y="6.6" width="11.4" height="3.4" fill="#e9b61c"/><path d="M0.8 4.3H5.3V2.3L9.6 5.4 5.3 8.5V6.6H0.8z" fill="#fff"/></svg>
<span class="t" style="left:154.70px;top:28.64px;color:#fff;font-size:12px;letter-spacing:-0.6px">Export</span>
<svg class="a" style="left:194px;top:34px" width="6" height="4"><path d="M0.5 0.5h5l-2.5 3z" fill="#e6e9ec"/></svg>
<div class="a" style="left:207px;top:26px;width:1px;height:15px;background:#05080b"></div>
<svg class="a" style="left:216px;top:27px" width="18" height="16" viewBox="0 0 18 16"><rect x="5.5" y="2" width="12" height="13.5" fill="#fff"/><circle cx="5.2" cy="5.2" r="5" fill="#b81c1f"/><path d="M3.2 3.2l4 4M7.2 3.2l-4 4" stroke="#fff" stroke-width="1.8"/></svg>
<div class="a" style="left:241px;top:26px;width:1px;height:15px;background:#05080b"></div>
<svg class="a" style="left:250px;top:26px" width="18" height="17" viewBox="0 0 18 17"><path d="M17 0.7L11 6.5" stroke="#c8473c" stroke-width="1.5"/><ellipse cx="9" cy="15.5" rx="5" ry="1.3" fill="#3a434b" opacity="0.6"/><path d="M10 5.3l3 3c-0.8 3-3 6.2-7.5 7.7L0.5 12.5c3-4.5 5.5-6.8 9.5-7.2z" fill="#d6b05a"/><path d="M3 13.5l6.5-5.5M5.5 15l5.5-5.8M2 11.5l6.5-5" stroke="#a27d34" stroke-width="0.8"/></svg>
<svg class="a" style="left:487px;top:28px" width="17" height="13" viewBox="0 0 17 13"><path d="M2.5 6.5a6 4.8 0 0 1 10.5-3" stroke="#1c8fe0" stroke-width="2" fill="none"/><path d="M14.5 6.5a6 4.8 0 0 1-10.5 3" stroke="#1c8fe0" stroke-width="2" fill="none"/><path d="M0 6.5h4M13 6.5h4" stroke="#1c8fe0" stroke-width="1.8"/><circle cx="8.5" cy="6.5" r="2.3" fill="#1c8fe0"/></svg>
<span class="t" style="left:508.00px;top:28.64px;color:#fff;font-size:12px;letter-spacing:-0.25px">Publish</span>
<svg class="a" style="left:557px;top:34px" width="6" height="4"><path d="M0.5 0.5h5l-2.5 3z" fill="#e6e9ec"/></svg>
<div class="a" style="left:571px;top:26px;width:1px;height:15px;background:#05080b"></div>
<svg class="a" style="left:580px;top:26px" width="15" height="15" viewBox="0 0 15 15"><path d="M12 9.5A5 5 0 1 1 10.5 3.5" stroke="#cfd5da" stroke-width="2.6" fill="none"/><path d="M8 1h6v6z" fill="#cfd5da"/></svg>
<div class="a" style="left:0;top:45px;width:601px;height:362px;background:#fff"><svg width="601" height="362" viewBox="0 0 601 362" style="position:absolute;left:0;top:0"><rect x="67" y="32" width="526" height="285" fill="#ebebeb"/><line x1="67" x2="593" y1="102.5" y2="102.5" stroke="#fff" stroke-width="0.6"/><line x1="67" x2="593" y1="204.5" y2="204.5" stroke="#fff" stroke-width="0.6"/><line x1="67" x2="593" y1="306.8" y2="306.8" stroke="#fff" stroke-width="0.6"/><line x1="67" x2="593" y1="51.5" y2="51.5" stroke="#fff" stroke-width="1.1"/><line x1="67" x2="593" y1="153.45" y2="153.45" stroke="#fff" stroke-width="1.1"/><line x1="67" x2="593" y1="255.4" y2="255.4" stroke="#fff" stroke-width="1.1"/><line x1="128.5" x2="128.5" y1="32" y2="317" stroke="#fff" stroke-width="1.1"/><line x1="229.45" x2="229.45" y1="32" y2="317" stroke="#fff" stroke-width="1.1"/><line x1="330.4" x2="330.4" y1="32" y2="317" stroke="#fff" stroke-width="1.1"/><line x1="431.35" x2="431.35" y1="32" y2="317" stroke="#fff" stroke-width="1.1"/><line x1="532.3" x2="532.3" y1="32" y2="317" stroke="#fff" stroke-width="1.1"/><line x1="128.5" x2="128.5" y1="179.7" y2="235.5" stroke="#333" stroke-width="1.1"/><line x1="128.5" x2="128.5" y1="278.4" y2="304" stroke="#333" stroke-width="1.1"/><rect x="90.4" y="235.5" width="76.2" height="42.90" fill="#fff" stroke="#333" stroke-width="1.1"/><line x1="90.4" x2="166.6" y1="253.7" y2="253.7" stroke="#333" stroke-width="2.2"/><line x1="229.45" x2="229.45" y1="143.1" y2="186.4" stroke="#333" stroke-width="1.1"/><line x1="229.45" x2="229.45" y1="215.2" y2="235.5" stroke="#333" stroke-width="1.1"/><rect x="191.35" y="186.4" width="76.2" height="28.80" fill="#fff" stroke="#333" stroke-width="1.1"/><line x1="191.35" x2="267.55" y1="196.0" y2="196.0" stroke="#333" stroke-width="2.2"/><circle cx="229.45" cy="136.4" r="2.6" fill="#333"/><line x1="330.4" x2="330.4" y1="146.3" y2="203.5" stroke="#333" stroke-width="1.1"/><line x1="330.4" x2="330.4" y1="266.3" y2="301.5" stroke="#333" stroke-width="1.1"/><rect x="292.3" y="203.5" width="76.2" height="62.80" fill="#fff" stroke="#333" stroke-width="1.1"/><line x1="292.3" x2="368.5" y1="235.8" y2="235.8" stroke="#333" stroke-width="2.2"/><circle cx="330.4" cy="45.3" r="2.6" fill="#333"/><line x1="431.35" x2="431.35" y1="127.2" y2="155.4" stroke="#333" stroke-width="1.1"/><line x1="431.35" x2="431.35" y1="190.2" y2="225.4" stroke="#333" stroke-width="1.1"/><rect x="393.25" y="155.4" width="76.2" height="34.80" fill="#fff" stroke="#333" stroke-width="1.1"/><line x1="393.25" x2="469.45" y1="174.6" y2="174.6" stroke="#333" stroke-width="2.2"/><circle cx="431.35" cy="242" r="2.6" fill="#333"/><rect x="494.2" y="144.8" width="76.2" height="4" fill="#333"/><line x1="63.4" x2="67" y1="51.5" y2="51.5" stroke="#333" stroke-width="1.1"/><text x="59.5" y="56.5" text-anchor="end" font-family="Liberation Sans" font-size="12" fill="#4d4d4d">1e+05</text><line x1="63.4" x2="67" y1="153.45" y2="153.45" stroke="#333" stroke-width="1.1"/><text x="59.5" y="158.45" text-anchor="end" font-family="Liberation Sans" font-size="12" fill="#4d4d4d">1e+04</text><line x1="63.4" x2="67" y1="255.4" y2="255.4" stroke="#333" stroke-width="1.1"/><text x="59.5" y="260.4" text-anchor="end" font-family="Liberation Sans" font-size="12" fill="#4d4d4d">1e+03</text><line x1="128.5" x2="128.5" y1="317" y2="320.6" stroke="#333" stroke-width="1.1"/><text x="128.5" y="335" text-anchor="middle" font-family="Liberation Sans" font-size="12" fill="#4d4d4d">Africa</text><line x1="229.45" x2="229.45" y1="317" y2="320.6" stroke="#333" stroke-width="1.1"/><text x="229.45" y="335" text-anchor="middle" font-family="Liberation Sans" font-size="12" fill="#4d4d4d">Americas</text><line x1="330.4" x2="330.4" y1="317" y2="320.6" stroke="#333" stroke-width="1.1"/><text x="330.4" y="335" text-anchor="middle" font-family="Liberation Sans" font-size="12" fill="#4d4d4d">Asia</text><line x1="431.35" x2="431.35" y1="317" y2="320.6" stroke="#333" stroke-width="1.1"/><text x="431.35" y="335" text-anchor="middle" font-family="Liberation Sans" font-size="12" fill="#4d4d4d">Europe</text><line x1="532.3" x2="532.3" y1="317" y2="320.6" stroke="#333" stroke-width="1.1"/><text x="532.3" y="335" text-anchor="middle" font-family="Liberation Sans" font-size="12" fill="#4d4d4d">Oceania</text><text x="330" y="352" text-anchor="middle" font-family="Liberation Sans" font-size="14.5" fill="#000">continent</text><text transform="translate(20,175.5) rotate(-90)" text-anchor="middle" font-family="Liberation Sans" font-size="14.5" fill="#000">gdpPercap</text><text x="67" y="21.8" font-family="Liberation Sans" font-size="17.95" fill="#000">Comparing GDP per capita across continents</text></svg></div>
</div>
</body></html>
